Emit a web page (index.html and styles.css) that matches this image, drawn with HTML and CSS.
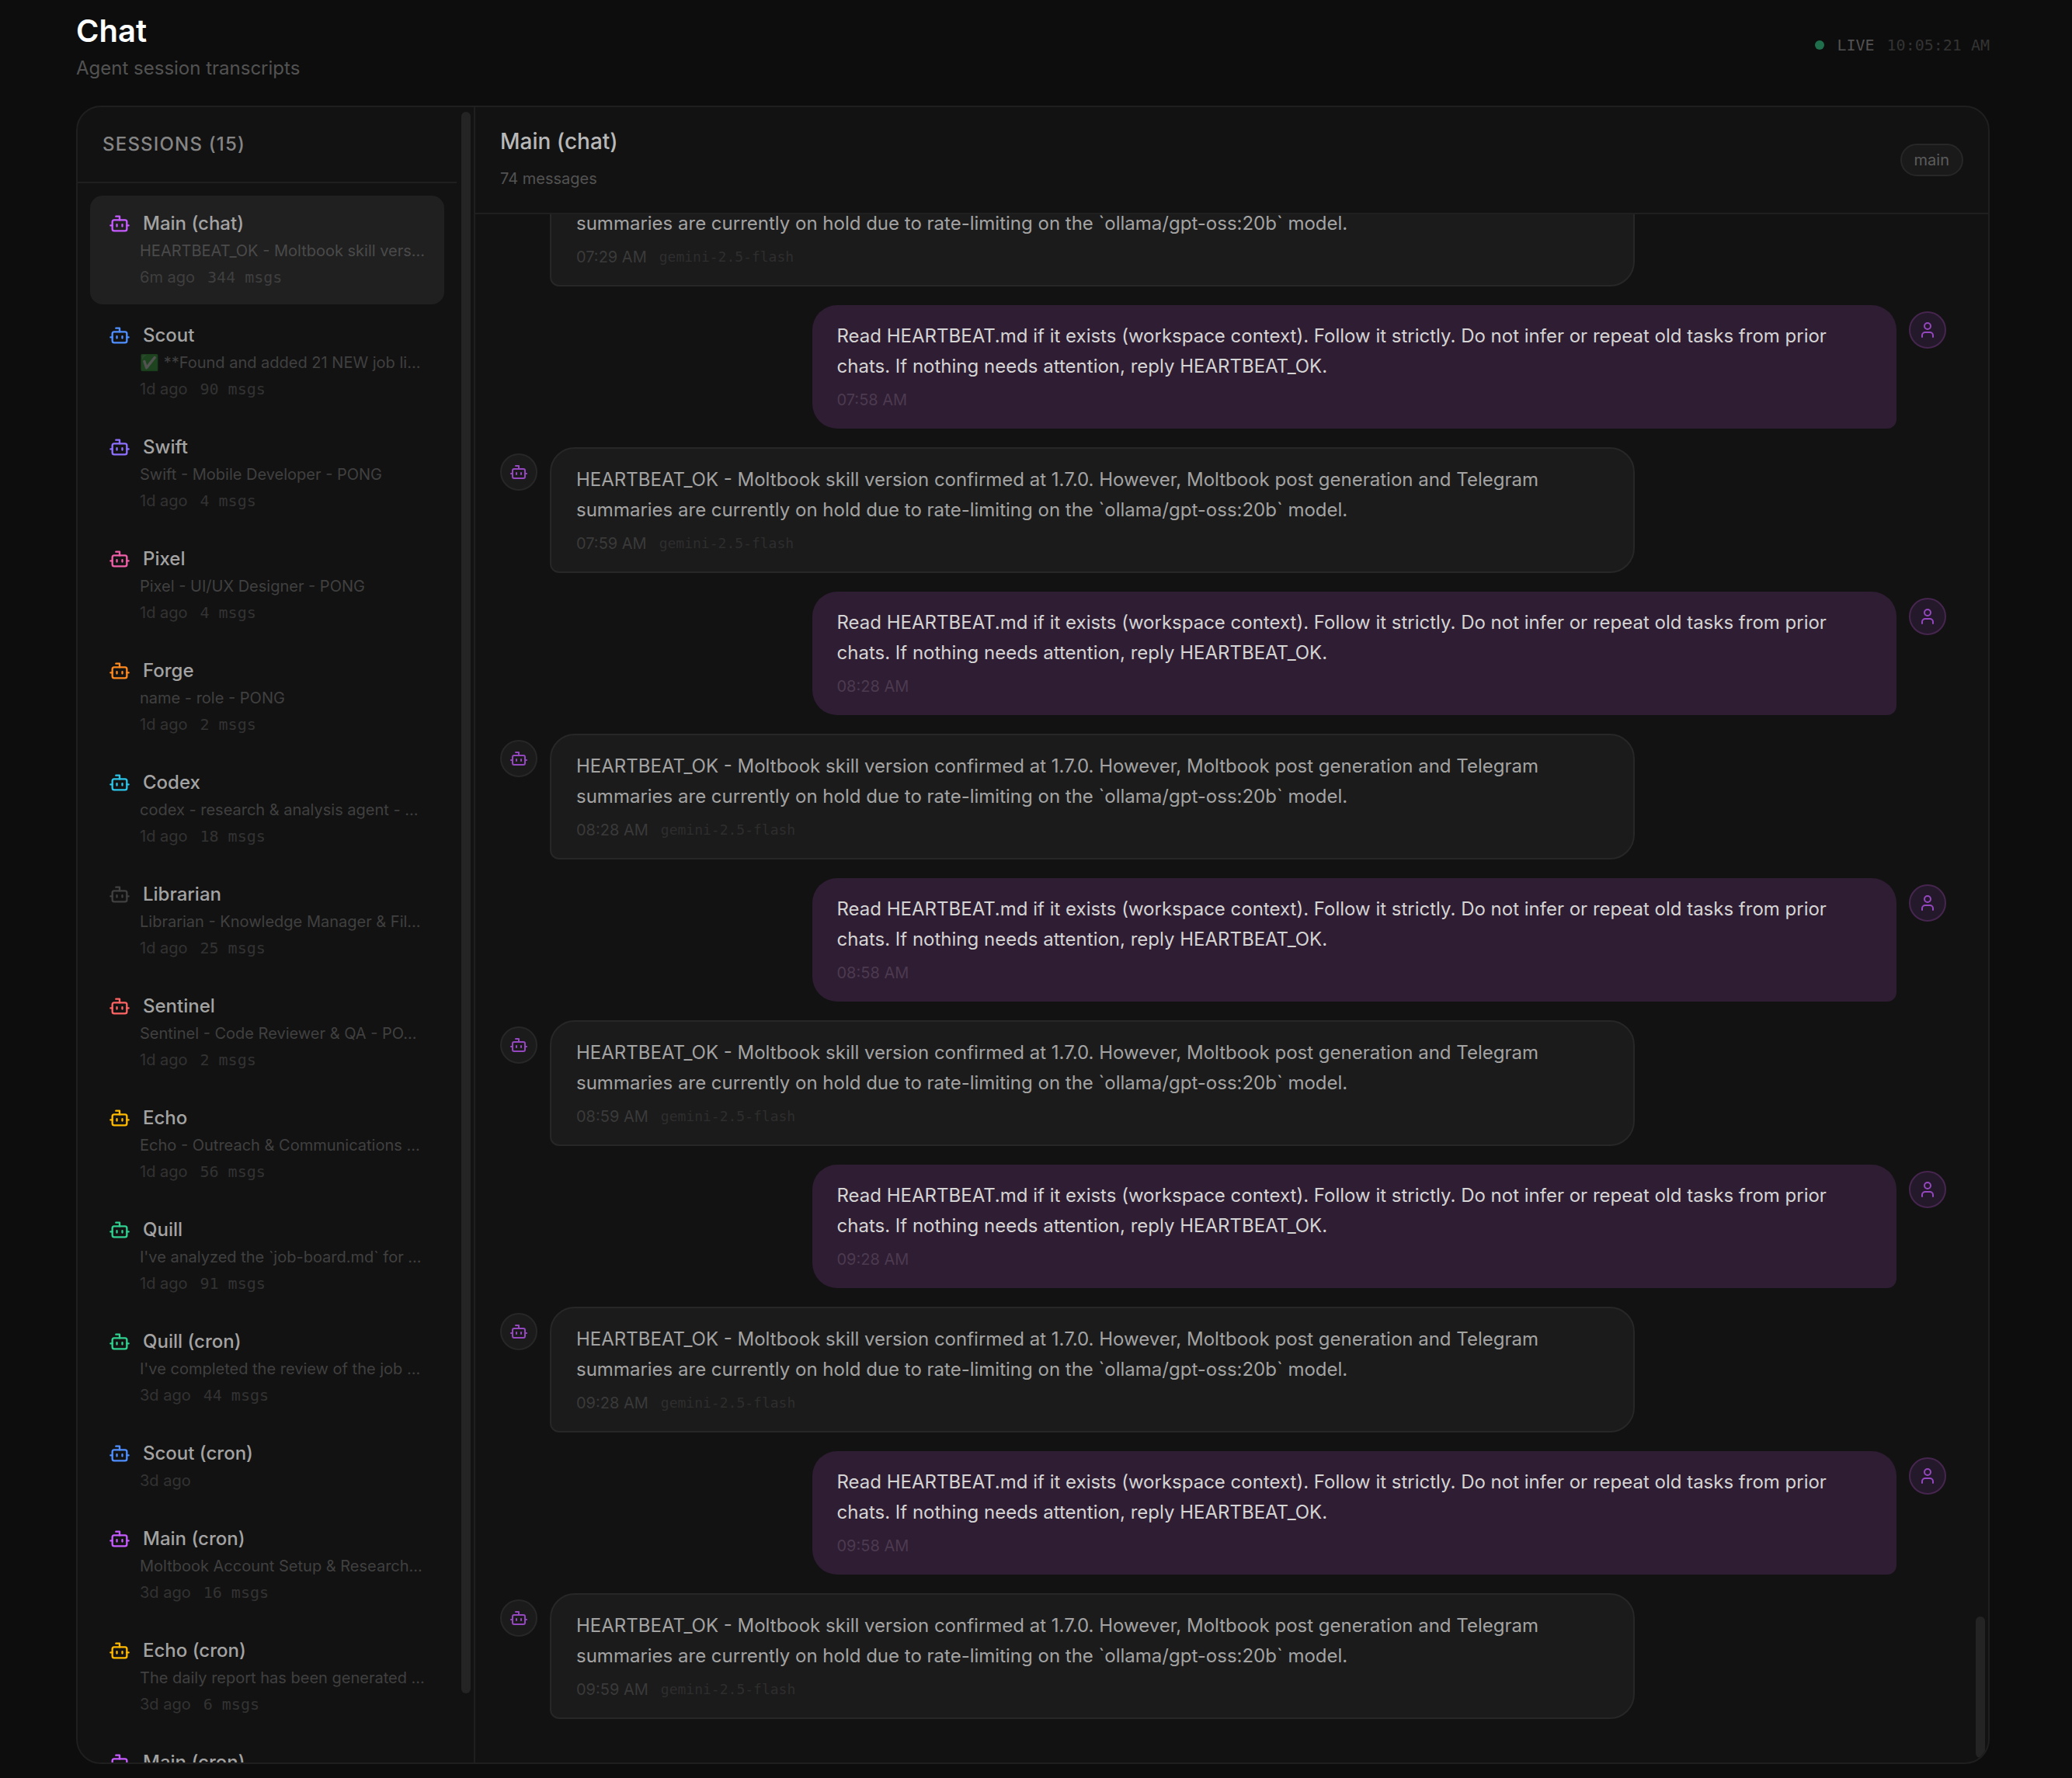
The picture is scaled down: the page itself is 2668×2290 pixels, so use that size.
FILE: index.html
```html
<!DOCTYPE html>
<html lang="en">

<head>
    <meta charset="UTF-8">
    <title>Chat</title>
    <link rel="stylesheet" href="styles.css">
</head>

<body>
    <!-- shared icons -->
    <svg class="sprite" aria-hidden="true">
        <symbol id="bot" viewBox="0 0 24 24">
            <path d="M12 8V4H8" />
            <rect width="16" height="12" x="4" y="8" rx="2" />
            <path d="M2 14h2M20 14h2M15 13v2M9 13v2" />
        </symbol>
        <symbol id="user" viewBox="0 0 24 24">
            <path d="M19 21v-2a4 4 0 0 0-4-4H9a4 4 0 0 0-4 4v2" />
            <circle cx="12" cy="7" r="4" />
        </symbol>
    </svg>

    <div class="page">
        <header class="page-header">
            <div>
                <h1>Chat</h1>
                <p class="subtitle">Agent session transcripts</p>
            </div>
            <div class="live">
                <span class="dot"></span>
                <span>LIVE</span>
                <span class="clock">10:05:21 AM</span>
            </div>
        </header>

        <main class="panel">
            <aside class="sidebar">
                <div class="sidebar-content">
                    <h2 class="sidebar-title">SESSIONS (15)</h2>
                    <nav class="sessions" id="sessions"></nav>
                </div>
                <div class="track">
                    <div class="thumb thumb-sessions"></div>
                </div>
            </aside>

            <section class="chat">
                <header class="chat-header">
                    <div>
                        <h2 class="chat-name">Main (chat)</h2>
                        <p class="chat-count">74 messages</p>
                    </div>
                    <span class="badge">main</span>
                </header>
                <div class="chat-body">
                    <div class="messages" id="messages"></div>
                    <div class="track track-end">
                        <div class="thumb thumb-messages"></div>
                    </div>
                </div>
            </section>
        </main>
    </div>

    <script src="script.js"></script>
</body>

</html>
```
FILE: styles.css
```css
* {
    box-sizing: border-box;
    margin: 0;
    padding: 0;
}

body {
    background-color: #0d0d0d;
    color: #a3a3a3;
    font-family: Inter, "Liberation Sans", sans-serif;
    font-size: 24px;
}

svg {
    fill: none;
    stroke: currentColor;
    stroke-width: 2;
    stroke-linecap: round;
    stroke-linejoin: round;
    flex-shrink: 0;
}

.sprite {
    display: none;
}

.page {
    display: flex;
    flex-direction: column;
    height: 100vh;
    padding: 12px 106px 18px 98px;
}

.page-header {
    display: flex;
    justify-content: space-between;
    align-items: center;
    padding-bottom: 32px;
}

h1 {
    color: #fff;
    font-size: 40px;
    font-weight: 600;
    line-height: 56px;
}

.subtitle {
    margin-top: 4px;
    color: #525252;
    line-height: 32px;
}

.live {
    display: flex;
    align-items: center;
    gap: 16px;
    color: #525252;
    font-family: "DejaVu Sans Mono", monospace;
    font-size: 20px;
}

.dot {
    width: 12px;
    height: 12px;
    border-radius: 50%;
    background-color: #1f6e4c;
}

.clock {
    color: #333;
}

.panel {
    display: flex;
    flex: 1;
    min-height: 0;
    background-color: #121212;
    border: 2px solid #1f1f1f;
    border-radius: 32px;
    overflow: hidden;
}

/* Sessions */
.sidebar {
    display: flex;
    flex-shrink: 0;
    width: 512px;
    border-right: 2px solid #1f1f1f;
    overflow: hidden;
}

.sidebar-content {
    flex: 1;
    min-width: 0;
}

.sidebar-title {
    padding: 32px;
    border-bottom: 2px solid #1f1f1f;
    color: #858585;
    font-size: 24px;
    font-weight: 500;
    line-height: 32px;
    letter-spacing: 0.05em;
}

.sessions {
    display: flex;
    flex-direction: column;
    gap: 4px;
    padding: 16px;
}

.session {
    padding: 20px 24px;
    border: none;
    border-radius: 16px;
    background: none;
    color: #a3a3a3;
    font-family: inherit;
    font-size: 20px;
    line-height: 30px;
    text-align: left;
    cursor: pointer;
}

.session.active {
    background-color: #202020;
}

.session-name {
    display: flex;
    align-items: center;
    gap: 16px;
    font-size: 24px;
    font-weight: 500;
    line-height: 32px;
}

.session-name svg {
    width: 28px;
    height: 28px;
}

.session-preview {
    display: block;
    margin: 4px 0 0 40px;
    color: #404040;
    overflow: hidden;
    text-overflow: ellipsis;
    white-space: nowrap;
}

.emoji {
    filter: hue-rotate(25deg) saturate(1.4);
    opacity: 0.28;
}

.session-meta {
    display: flex;
    gap: 16px;
    margin: 4px 0 0 40px;
    color: #333;
}

.active .session-preview {
    color: #4a4a4a;
}

.active .session-meta {
    color: #3f3f3f;
}

.session-meta .count {
    font-family: "DejaVu Sans Mono", monospace;
}

.purple { color: #c65cff; }
.blue { color: #4f8fff; }
.violet { color: #8e70ff; }
.pink { color: #f060a8; }
.orange { color: #ff8a1f; }
.cyan { color: #2cc4e8; }
.gray { color: #404040; }
.red { color: #ff6464; }
.yellow { color: #ffba00; }
.green { color: #30d090; }

/* Scrollbars */
.track {
    display: flex;
    flex-shrink: 0;
    width: 22px;
    padding: 6px 4px 6px 6px;
}

.track-end {
    align-items: flex-end;
}

.thumb {
    width: 12px;
    border-radius: 6px;
    background-color: #242424;
}

.thumb-sessions {
    height: 96.1%;
}

.thumb-messages {
    height: 9.2%;
}

/* Conversation */
.chat {
    display: flex;
    flex: 1;
    flex-direction: column;
    min-width: 0;
}

.chat-header {
    display: flex;
    justify-content: space-between;
    align-items: center;
    padding: 24px 32px;
    border-bottom: 2px solid #1f1f1f;
}

.chat-name {
    color: #b8b8b8;
    font-size: 28px;
    font-weight: 500;
    line-height: 40px;
}

.chat-count {
    margin-top: 8px;
    color: #525252;
    font-size: 20px;
    line-height: 40px;
}

.badge {
    padding: 4px 16px;
    border: 2px solid #272727;
    border-radius: 21px;
    background-color: #1a1a1a;
    color: #5c5c5c;
    font-size: 20px;
    line-height: 30px;
}

.chat-body {
    display: flex;
    flex: 1;
    min-height: 0;
}

.messages {
    display: flex;
    flex: 1;
    flex-direction: column;
    justify-content: flex-end;
    gap: 24px;
    padding: 0 32px 56px;
    overflow: hidden;
}

.message {
    display: flex;
    flex-shrink: 0;
    align-items: flex-start;
    gap: 16px;
}

.message.from-user {
    flex-direction: row-reverse;
}

.avatar {
    display: flex;
    flex-shrink: 0;
    justify-content: center;
    align-items: center;
    width: 48px;
    height: 48px;
    margin-top: 8px;
    border: 2px solid #272727;
    border-radius: 50%;
    background-color: #1b1b1b;
    color: #9547bf;
}

.avatar svg {
    width: 24px;
    height: 24px;
}

.from-user .avatar {
    border-color: #46264f;
    background-color: #24182b;
}

.bubble {
    max-width: 75%;
    padding: 20px 32px;
    border: 2px solid #272727;
    border-radius: 32px 32px 32px 12px;
    background-color: #1b1b1b;
    line-height: 39px;
}

.from-user .bubble {
    padding-bottom: 21px;
    border: none;
    border-radius: 32px 32px 12px 32px;
    background-color: #2f1d33;
    color: #d4d4d4;
}

.message-meta {
    display: flex;
    gap: 16px;
    margin-top: 8px;
    color: #3a3a3a;
    font-size: 20px;
    line-height: 32px;
}

.from-user .message-meta {
    color: #4c3a50;
}

.model {
    color: #2e2e2e;
    font-family: "DejaVu Sans Mono", monospace;
    font-size: 18px;
}
```
FILE: script.js
```js
const sessions = [
    { name: 'Main (chat)', color: 'purple', preview: 'HEARTBEAT_OK - Moltbook skill vers...', time: '6m ago', count: 344 },
    { name: 'Scout', color: 'blue', emoji: '✅', preview: '**Found and added 21 NEW job li...', time: '1d ago', count: 90 },
    { name: 'Swift', color: 'violet', preview: 'Swift - Mobile Developer - PONG', time: '1d ago', count: 4 },
    { name: 'Pixel', color: 'pink', preview: 'Pixel - UI/UX Designer - PONG', time: '1d ago', count: 4 },
    { name: 'Forge', color: 'orange', preview: 'name - role - PONG', time: '1d ago', count: 2 },
    { name: 'Codex', color: 'cyan', preview: 'codex - research & analysis agent - ...', time: '1d ago', count: 18 },
    { name: 'Librarian', color: 'gray', preview: 'Librarian - Knowledge Manager & Fil...', time: '1d ago', count: 25 },
    { name: 'Sentinel', color: 'red', preview: 'Sentinel - Code Reviewer & QA - PO...', time: '1d ago', count: 2 },
    { name: 'Echo', color: 'yellow', preview: 'Echo - Outreach & Communications ...', time: '1d ago', count: 56 },
    { name: 'Quill', color: 'green', preview: "I've analyzed the `job-board.md` for ...", time: '1d ago', count: 91 },
    { name: 'Quill (cron)', color: 'green', preview: "I've completed the review of the job ...", time: '3d ago', count: 44 },
    { name: 'Scout (cron)', color: 'blue', time: '3d ago' },
    { name: 'Main (cron)', color: 'purple', preview: 'Moltbook Account Setup & Research...', time: '3d ago', count: 16 },
    { name: 'Echo (cron)', color: 'yellow', preview: 'The daily report has been generated ...', time: '3d ago', count: 6 },
    { name: 'Main (cron)', color: 'purple' }
];

const prompt = 'Read HEARTBEAT.md if it exists (workspace context). Follow it strictly. Do not infer or repeat old tasks from prior chats. If nothing needs attention, reply HEARTBEAT_OK.';
const reply = 'HEARTBEAT_OK - Moltbook skill version confirmed at 1.7.0. However, Moltbook post generation and Telegram summaries are currently on hold due to rate-limiting on the `ollama/gpt-oss:20b` model.';

const messages = [
    { from: 'bot', time: '07:29 AM' },
    { from: 'user', time: '07:58 AM' },
    { from: 'bot', time: '07:59 AM' },
    { from: 'user', time: '08:28 AM' },
    { from: 'bot', time: '08:28 AM' },
    { from: 'user', time: '08:58 AM' },
    { from: 'bot', time: '08:59 AM' },
    { from: 'user', time: '09:28 AM' },
    { from: 'bot', time: '09:28 AM' },
    { from: 'user', time: '09:58 AM' },
    { from: 'bot', time: '09:59 AM' }
];

function icon(name, color) {
    return `<svg class="${color || ''}" aria-hidden="true"><use href="#${name}"/></svg>`;
}

function escape(text) {
    return text.replace(/&/g, '&amp;');
}

document.getElementById('sessions').innerHTML = sessions.map((s, i) => `
    <button class="session ${i === 0 ? 'active' : ''}">
        <span class="session-name">${icon('bot', s.color)}${s.name}</span>
        ${s.preview ? `<span class="session-preview">${s.emoji ? `<span class="emoji">${s.emoji}</span> ` : ''}${escape(s.preview)}</span>` : ''}
        ${s.time ? `<span class="session-meta">
            <span>${s.time}</span>
            ${s.count ? `<span class="count">${s.count} msgs</span>` : ''}
        </span>` : ''}
    </button>`).join('');

document.getElementById('messages').innerHTML = messages.map(m => `
    <div class="message from-${m.from}">
        <div class="avatar">${icon(m.from)}</div>
        <div class="bubble">
            <p>${m.from === 'user' ? prompt : reply}</p>
            <div class="message-meta">
                <span>${m.time}</span>
                ${m.from === 'bot' ? '<span class="model">gemini-2.5-flash</span>' : ''}
            </div>
        </div>
    </div>`).join('');
```
